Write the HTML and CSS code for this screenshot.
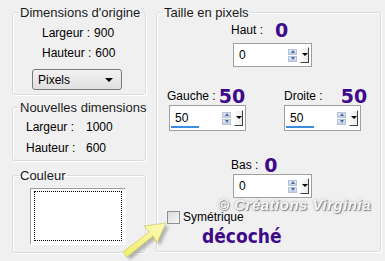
FILE: index.html
```html
<!DOCTYPE html>
<html lang="fr">
<head>
    <meta charset="UTF-8">
    <title>Taille de la zone de travail</title>
    <link rel="stylesheet" href="styles.css">
</head>
<body>
    <div class="dialog">
        <!-- Colonne de gauche -->
        <div class="left-col">
            <fieldset class="group group-origin">
                <legend>Dimensions d'origine</legend>
                <div class="info-row"><span class="info-label">Largeur :</span><span>900</span></div>
                <div class="info-row"><span class="info-label">Hauteur :</span><span>600</span></div>
                <div class="select">
                    <span>Pixels</span>
                    <span class="select-arrow"></span>
                </div>
            </fieldset>

            <fieldset class="group group-new">
                <legend>Nouvelles dimensions</legend>
                <div class="new-row"><span class="new-label">Largeur :</span><span>1000</span></div>
                <div class="new-row"><span class="new-label">Hauteur :</span><span>600</span></div>
            </fieldset>

            <fieldset class="group group-color">
                <legend>Couleur</legend>
                <div class="swatch"><div class="swatch-inner"></div></div>
            </fieldset>
        </div>

        <!-- Taille en pixels -->
        <fieldset class="group group-size">
            <legend>Taille en pixels</legend>

            <div class="field field-top">
                <div class="field-head"><span>Haut :</span><span class="big">0</span></div>
                <div class="spin">
                    <span class="spin-value">0</span>
                    <span class="spin-arrows"><i class="up"></i><i class="down"></i></span>
                    <span class="spin-drop"></span>
                </div>
            </div>

            <div class="field-pair">
                <div class="field field-left">
                    <div class="field-head"><span>Gauche :</span><span class="big">50</span></div>
                    <div class="spin spin-tall">
                        <span class="spin-value">50</span>
                        <span class="spin-arrows"><i class="up"></i><i class="down"></i></span>
                        <span class="spin-drop"></span>
                        <span class="spin-bar"></span>
                    </div>
                </div>
                <div class="field field-right">
                    <div class="field-head"><span>Droite :</span><span class="big">50</span></div>
                    <div class="spin spin-tall">
                        <span class="spin-value">50</span>
                        <span class="spin-arrows"><i class="up"></i><i class="down"></i></span>
                        <span class="spin-drop"></span>
                        <span class="spin-bar"></span>
                    </div>
                </div>
            </div>

            <div class="field field-bottom">
                <div class="field-head"><span>Bas :</span><span class="big">0</span></div>
                <div class="spin">
                    <span class="spin-value">0</span>
                    <span class="spin-arrows"><i class="up"></i><i class="down"></i></span>
                    <span class="spin-drop"></span>
                </div>
            </div>

            <label class="check">
                <span class="check-box"></span>
                <span>Symétrique</span>
            </label>
            <div class="note">décoché</div>
        </fieldset>

        <div class="watermark">© Créations Virginia</div>

        <svg class="pointer" width="60" height="50" viewBox="0 0 60 50">
            <defs>
                <linearGradient id="yel" x1="0" y1="1" x2="1" y2="0">
                    <stop offset="0" stop-color="#f2ee6a"/>
                    <stop offset="1" stop-color="#fbf9b8"/>
                </linearGradient>
                <filter id="sh" x="-30%" y="-30%" width="160%" height="160%">
                    <feGaussianBlur stdDeviation="1.6"/>
                </filter>
            </defs>
            <polygon points="44,10 35,30 31,23 5,44 1,39 27,19 22,13" fill="#8a8a8a" opacity="0.6" filter="url(#sh)" transform="translate(3,3)"/>
            <polygon points="44,10 35,30 31,23 5,44 1,39 27,19 22,13" fill="url(#yel)" stroke="#c9c24a" stroke-width="0.6"/>
        </svg>
    </div>
</body>
</html>
```

FILE: styles.css
```css
* {
    box-sizing: border-box;
}

body {
    margin: 0;
    background-color: #f0f0f0;
    font-family: "Liberation Sans", sans-serif;
    font-size: 12px;
    color: #000;
}

.dialog {
    position: relative;
    width: 385px;
    height: 261px;
    display: flex;
    gap: 10px;
    padding: 5px 0 0 12px;
}

.left-col {
    width: 134px;
    display: flex;
    flex-direction: column;
}

/* Group boxes */
.group {
    margin: 0;
    padding: 0;
    border: 1px solid #d9dde2;
    border-radius: 3px;
    box-shadow: inset 1px 1px 0 #fff, 1px 1px 0 #fff;
    min-width: 0;
}

.group legend {
    padding: 0 1px;
    margin-left: 6px;
    font-size: 13px;
    white-space: nowrap;
    color: #1a1a1a;
}

.group-origin {
    height: 90px;
}

.group-new {
    margin-top: 5px;
    height: 61px;
}

.group-color {
    margin-top: 7px;
    height: 85px;
}

.info-row {
    display: flex;
    gap: 4px;
    padding-left: 29px;
    height: 20px;
    align-items: center;
}

.info-row:first-of-type {
    margin-top: 3px;
}

.select {
    margin: 6px 0 0 19px;
    width: 90px;
    height: 21px;
    border: 1px solid #7a7a7a;
    border-radius: 3px;
    background: linear-gradient(#f2f2f2, #e0e0e0);
    display: flex;
    align-items: center;
    justify-content: space-between;
    padding: 0 8px 0 5px;
}

.select-arrow {
    width: 0;
    height: 0;
    border-left: 4px solid transparent;
    border-right: 4px solid transparent;
    border-top: 4px solid #000;
}

.new-row {
    display: flex;
    height: 21px;
    align-items: center;
    padding-left: 13px;
}

.new-row:first-of-type {
    margin-top: 1px;
}

.new-label {
    width: 60px;
}

.swatch {
    margin: 5px 0 0 17px;
    width: 96px;
    height: 57px;
    background: #fff;
    border-top: 1px solid #a0a0a0;
    border-left: 1px solid #a0a0a0;
    border-right: 1px solid #fff;
    border-bottom: 1px solid #fff;
    padding: 2px 3px 3px 3px;
}

.swatch-inner {
    width: 100%;
    height: 100%;
    border: 1px dotted #000;
}

/* Taille en pixels */
.group-size {
    width: 225px;
    height: 247px;
    position: relative;
}

.field-head {
    display: flex;
    align-items: center;
    height: 18px;
}

.big {
    font-family: "DejaVu Sans", sans-serif;
    font-weight: bold;
    font-size: 19px;
    color: #3f0a8a;
}

.field-top {
    margin: 1px 0 0 74px;
}

.field-top .big {
    margin-left: 12px;
}

.field-pair {
    display: flex;
    margin-top: 20px;
    padding-left: 10px;
    gap: 38px;
}

.field-left .big {
    margin-left: 3px;
}

.field-right .big {
    margin-left: 18px;
}

.field-right .spin {
    margin-left: 0;
}

.field-bottom {
    margin: 25px 0 0 74px;
}

.field-bottom .big {
    margin-left: 6px;
}

.field-bottom .spin {
    margin-top: 0;
}

.spin {
    position: relative;
    margin: 4px 0 0 2px;
    width: 79px;
    height: 24px;
    border: 1px solid #a0a0a0;
    background: #fff;
    display: flex;
    align-items: center;
    padding-left: 5px;
    font-size: 12px;
}

.spin-tall {
    width: 77px;
    height: 26px;
    margin-top: 0;
}

.spin-value {
    flex: 1;
}

.spin-arrows {
    display: flex;
    flex-direction: column;
    gap: 1px;
    margin-right: 3px;
}

.spin-arrows i {
    display: block;
    width: 9px;
    height: 6px;
    background: linear-gradient(#e4eaf4, #c4d0e4);
    border: 1px solid #b6c2d6;
    position: relative;
}

.spin-arrows i::after {
    content: "";
    position: absolute;
    left: 1.5px;
    width: 0;
    height: 0;
    border-left: 2.5px solid transparent;
    border-right: 2.5px solid transparent;
}

.spin-arrows .up::after {
    top: 0.5px;
    border-bottom: 3px solid #4a6aa8;
}

.spin-arrows .down::after {
    top: 0.5px;
    border-top: 3px solid #4a6aa8;
}

.spin-drop {
    width: 9px;
    height: 16px;
    margin-right: 2px;
    background: linear-gradient(90deg, #fbfbfb, #e8e8e8);
    border-top: 1px solid #fff;
    border-left: 1px solid #fff;
    border-right: 1px solid #404040;
    border-bottom: 1px solid #404040;
    position: relative;
}

.spin-drop::after {
    content: "";
    position: absolute;
    left: 1px;
    top: 5px;
    border-left: 3px solid transparent;
    border-right: 3px solid transparent;
    border-top: 3px solid #000;
}

.spin-bar {
    position: absolute;
    left: 1px;
    bottom: 2px;
    width: 28px;
    height: 2px;
    background: #3b8de0;
}

.check {
    display: flex;
    align-items: center;
    gap: 3px;
    margin: 12px 0 0 10px;
}

.check-box {
    width: 13px;
    height: 13px;
    border: 1px solid #8e8f8f;
    background: linear-gradient(135deg, #dcdcdc, #f8f8f8);
}

.note {
    margin: 1px 0 0 45px;
    font-family: "DejaVu Sans Condensed", "DejaVu Sans", sans-serif;
    font-weight: bold;
    font-size: 19px;
    color: #3f0a8a;
}

.watermark {
    position: absolute;
    left: 218px;
    top: 196px;
    white-space: nowrap;
    font-family: "Liberation Sans", sans-serif;
    font-style: italic;
    font-weight: bold;
    font-size: 15px;
    letter-spacing: 0.5px;
    color: #f6f6f6;
    text-shadow: 1px 1px 1px #777, 0 0 3px #999;
    opacity: 0.85;
}

.pointer {
    position: absolute;
    left: 122px;
    top: 213px;
}
```
